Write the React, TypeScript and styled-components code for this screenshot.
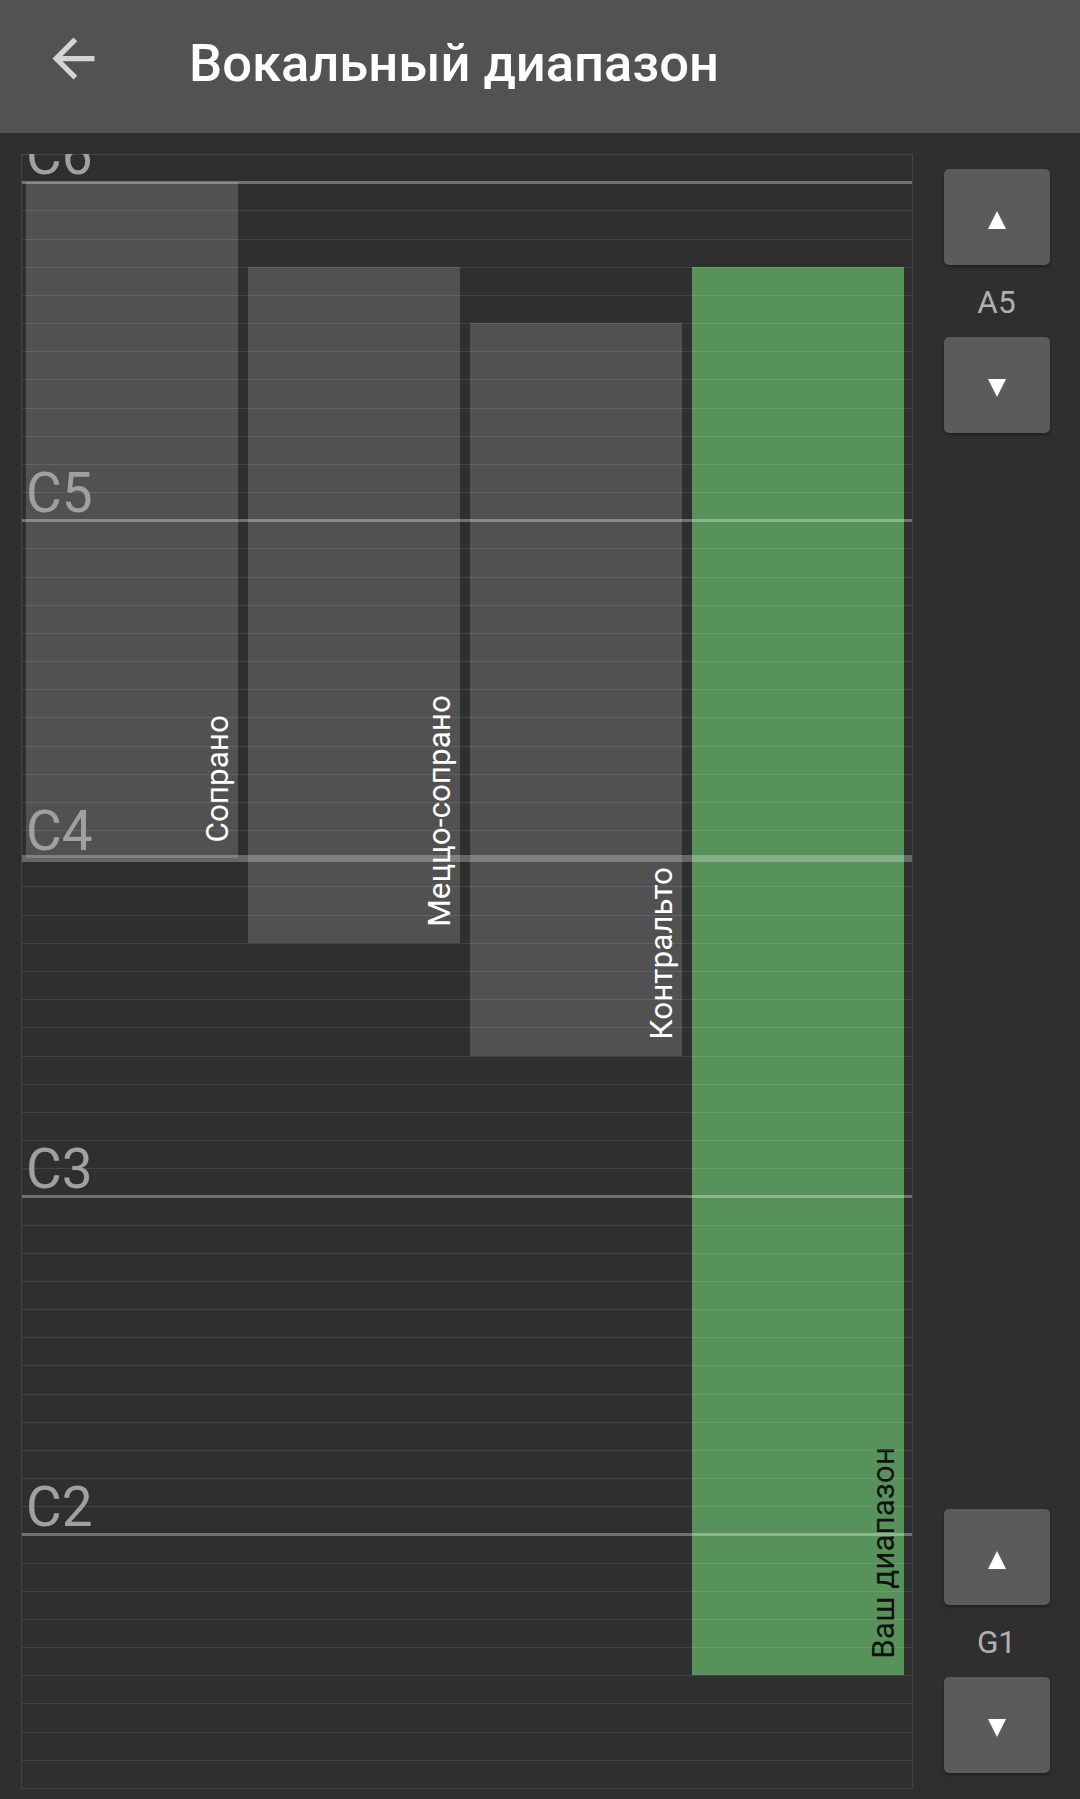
import { useState } from "react";
import styled, { createGlobalStyle } from "styled-components";

// one staff line per semitone, C#6 at the top edge, D#1 at the bottom
const TOP_MIDI = 85;
const ROWS = 58;
const NAMES = ["C", "C#", "D", "D#", "E", "F", "F#", "G", "G#", "A", "A#", "B"];

const noteName = (midi: number) => NAMES[midi % 12] + (Math.floor(midi / 12) - 1);
const lineOf = (midi: number) => TOP_MIDI - midi;

const VOICES = [
  { name: "Сопрано", high: 84, low: 60 },
  { name: "Меццо-сопрано", high: 81, low: 57 },
  { name: "Контральто", high: 79, low: 53 },
];

const GlobalStyle = createGlobalStyle`
  html, body {
    margin: 0;
    padding: 0;
    background: #2f2f2f;
  }
  body {
    font-family: Roboto, "Noto Sans", "Liberation Sans", sans-serif;
  }
`;

const Screen = styled.div`
  height: 100vh;
  display: flex;
  flex-direction: column;
  background: #2f2f2f;
  color: #fff;
  overflow: hidden;
`;

const TopBar = styled.header`
  flex: 0 0 133px;
  box-sizing: border-box;
  display: flex;
  align-items: flex-start;
  padding: 27px 0 0 42px;
  background: #525252;
`;

const BackButton = styled.button`
  width: 63px;
  height: 63px;
  padding: 0;
  border: 0;
  background: transparent;
  color: #d4d4d4;
  display: flex;
  cursor: pointer;

  svg {
    width: 63px;
    height: 63px;
  }
`;

const Title = styled.h1`
  margin: 5px 0 0 84px;
  font-size: 52.5px;
  font-weight: 500;
  line-height: normal;
  color: #fff;
`;

const Content = styled.main`
  flex: 1;
  min-height: 0;
  display: flex;
  padding: 21px 0 10px 21px;
`;

const Chart = styled.div`
  position: relative;
  flex: 0 0 892px;
  height: 1635px;
  box-sizing: border-box;
  border: 1px solid rgba(255, 255, 255, 0.1);
  border-top: 0;
  overflow: hidden;
`;

const Bars = styled.div`
  height: 100%;
  box-sizing: border-box;
  display: grid;
  grid-template-columns: repeat(4, minmax(0, 1fr));
  grid-template-rows: repeat(${ROWS}, minmax(0, 1fr));
  column-gap: 10px;
  padding: 0 8px 0 4px;
`;

const Bar = styled.div<{ $col: number; $from: number; $to: number; $mine?: boolean }>`
  grid-column: ${(p) => p.$col};
  grid-row: ${(p) => `${p.$from} / ${p.$to}`};
  display: flex;
  justify-content: flex-end;
  align-items: flex-end;
  padding: 0 2px 16px 0;
  background: ${(p) => (p.$mine ? "#57925a" : "#515151")};
  overflow: hidden;
`;

const BarLabel = styled.span<{ $mine?: boolean }>`
  writing-mode: vertical-rl;
  transform: rotate(180deg);
  font-size: 31.5px;
  line-height: normal;
  white-space: nowrap;
  color: ${(p) => (p.$mine ? "#111" : "#fff")};
`;

const Staff = styled.div`
  position: absolute;
  inset: 0;
  display: flex;
  flex-direction: column;
  pointer-events: none;
`;

const LINE = {
  semi: { size: 1, color: "rgba(255, 255, 255, 0.1)" },
  octave: { size: 3, color: "rgba(255, 255, 255, 0.32)" },
  middle: { size: 7, color: "rgba(255, 255, 255, 0.27)" },
};

const Band = styled.div<{ $kind: keyof typeof LINE }>`
  position: relative;
  flex: 1 1 0;
  min-height: 0;

  &::before {
    content: "";
    position: absolute;
    left: 0;
    right: 0;
    top: ${(p) => -Math.floor(LINE[p.$kind].size / 2)}px;
    height: ${(p) => LINE[p.$kind].size}px;
    background: ${(p) => LINE[p.$kind].color};
  }
`;

const OctaveLabel = styled.span`
  position: absolute;
  left: 4px;
  bottom: calc(100% - 1px);
  font-size: 55px;
  line-height: 1;
  color: #a0a0a0;
`;

const Side = styled.aside`
  flex: 1;
  display: flex;
  flex-direction: column;
  justify-content: space-between;
  align-items: center;
  padding: 15px 0 16px;
`;

const Stepper = styled.div`
  display: flex;
  flex-direction: column;
  align-items: center;
`;

const StepButton = styled.button`
  width: 106px;
  height: 96px;
  padding: 0;
  border: 0;
  border-radius: 5px;
  background: #5b5b5b;
  box-shadow: 0 2px 3px rgba(0, 0, 0, 0.35);
  display: flex;
  align-items: center;
  justify-content: center;
  color: #fff;
  cursor: pointer;

  svg {
    width: 18px;
    height: 18px;
    margin-top: 6px;
  }
`;

const NoteValue = styled.div`
  height: 72px;
  box-sizing: border-box;
  padding-top: 4px;
  font-size: 31.5px;
  line-height: 68px;
  color: #b0b0b0;
`;

const Up = () => (
  <svg viewBox="0 0 18 18">
    <polygon points="9,0 18,18 0,18" fill="currentColor" />
  </svg>
);

const Down = () => (
  <svg viewBox="0 0 18 18">
    <polygon points="0,0 18,0 9,18" fill="currentColor" />
  </svg>
);

const lineKind = (midi: number): keyof typeof LINE =>
  midi === 60 ? "middle" : midi % 12 === 0 ? "octave" : "semi";

export default function App() {
  const [high, setHigh] = useState(81);
  const [low, setLow] = useState(31);

  const maxMidi = TOP_MIDI;
  const minMidi = TOP_MIDI - ROWS;

  return (
    <Screen>
      <GlobalStyle />
      <TopBar>
        <BackButton aria-label="Назад">
          <svg viewBox="0 0 24 24">
            <path
              fill="currentColor"
              d="M20 11H7.83l5.59-5.59L12 4l-8 8 8 8 1.41-1.41L7.83 13H20v-2z"
            />
          </svg>
        </BackButton>
        <Title>Вокальный диапазон</Title>
      </TopBar>

      <Content>
        <Chart>
          <Bars>
            {VOICES.map((v, i) => (
              <Bar key={v.name} $col={i + 1} $from={lineOf(v.high) + 1} $to={lineOf(v.low) + 1}>
                <BarLabel>{v.name}</BarLabel>
              </Bar>
            ))}
            <Bar $col={4} $from={lineOf(high) + 1} $to={lineOf(low) + 1} $mine>
              <BarLabel $mine>Ваш диапазон</BarLabel>
            </Bar>
          </Bars>
          <Staff>
            {Array.from({ length: ROWS }, (_, i) => {
              const midi = TOP_MIDI - i;
              const kind = lineKind(midi);
              return (
                <Band key={midi} $kind={kind}>
                  {kind !== "semi" && <OctaveLabel>{noteName(midi)}</OctaveLabel>}
                </Band>
              );
            })}
          </Staff>
        </Chart>

        <Side>
          <Stepper>
            <StepButton onClick={() => setHigh((h) => Math.min(maxMidi, h + 1))}>
              <Up />
            </StepButton>
            <NoteValue>{noteName(high)}</NoteValue>
            <StepButton onClick={() => setHigh((h) => Math.max(low + 1, h - 1))}>
              <Down />
            </StepButton>
          </Stepper>
          <Stepper>
            <StepButton onClick={() => setLow((l) => Math.min(high - 1, l + 1))}>
              <Up />
            </StepButton>
            <NoteValue>{noteName(low)}</NoteValue>
            <StepButton onClick={() => setLow((l) => Math.max(minMidi, l - 1))}>
              <Down />
            </StepButton>
          </Stepper>
        </Side>
      </Content>
    </Screen>
  );
}
